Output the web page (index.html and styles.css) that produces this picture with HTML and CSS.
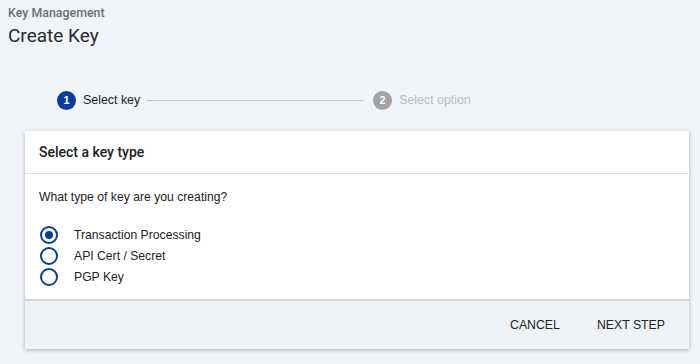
FILE: index.html
```html
<!DOCTYPE html>
<html lang="en">
<head>
    <meta charset="UTF-8">
    <meta name="viewport" content="width=device-width, initial-scale=1.0">
    <title>Create Key</title>
    <link rel="stylesheet" href="styles.css">
</head>
<body>

    <!-- Page heading -->
    <div class="page-head">
        <div class="breadcrumb">Key Management</div>
        <h1>Create Key</h1>
    </div>

    <!-- Stepper -->
    <div class="stepper">
        <div class="step active">
            <span class="step-num">1</span>
            <span class="step-label">Select key</span>
        </div>
        <div class="step-line"></div>
        <div class="step">
            <span class="step-num">2</span>
            <span class="step-label">Select option</span>
        </div>
    </div>

    <!-- Card -->
    <div class="card">
        <div class="card-header">Select a key type</div>
        <div class="card-body">
            <p class="question">What type of key are you creating?</p>
            <label class="radio">
                <input type="radio" name="keyType" checked>
                <span class="dot"></span>
                Transaction Processing
            </label>
            <label class="radio">
                <input type="radio" name="keyType">
                <span class="dot"></span>
                API Cert / Secret
            </label>
            <label class="radio">
                <input type="radio" name="keyType">
                <span class="dot"></span>
                PGP Key
            </label>
        </div>
        <div class="card-footer">
            <button class="btn">Cancel</button>
            <button class="btn">Next Step</button>
        </div>
    </div>

</body>
</html>
```

FILE: styles.css
```css
* {
    margin: 0;
    padding: 0;
    box-sizing: border-box;
}
body {
    font-family: "Liberation Sans", Arial, sans-serif;
    background-color: #f1f4f9;
    color: #222;
    height: 364px;
    overflow: hidden;
}
/* Heading */
.page-head {
    padding: 5px 8px 0;
}
.breadcrumb {
    font-family: Roboto, sans-serif;
    font-size: 12.4px;
    font-weight: 500;
    color: #6f6f6f;
    line-height: 16px;
}
h1 {
    font-family: Roboto, sans-serif;
    font-size: 19px;
    font-weight: 400;
    color: #2a2a2a;
    line-height: 26px;
    margin-top: 2px;
}
/* Stepper */
.stepper {
    display: flex;
    align-items: center;
    padding-left: 57px;
    margin-top: 41px;
    height: 20px;
}
.step {
    display: flex;
    align-items: center;
    gap: 7px;
}
.step-num {
    width: 19px;
    height: 19px;
    border-radius: 50%;
    background: #a3a3a3;
    color: white;
    font-size: 11px;
    font-weight: bold;
    display: flex;
    align-items: center;
    justify-content: center;
}
.step-label {
    font-size: 12.4px;
    color: #bdbdbd;
}
.step.active .step-num {
    background: #0a3c9c;
}
.step.active .step-label {
    color: #222;
}
.step-line {
    width: 217px;
    height: 1px;
    background: #c9c9c9;
    margin: 0 9px 0 7px;
}
/* Card */
.card {
    width: 664px;
    margin: 21px 0 0 25px;
    background: white;
    box-shadow: 0 1px 4px rgba(0, 0, 0, 0.3);
}
.card-header {
    font-family: Roboto, sans-serif;
    font-size: 14px;
    font-weight: 500;
    color: #222;
    height: 43px;
    line-height: 43px;
    padding-left: 14px;
    border-bottom: 1px solid #dcdde2;
}
.card-body {
    padding: 15px 14px 12px;
    font-size: 12.2px;
}
.question {
    line-height: 16px;
    margin-bottom: 19px;
}
.radio {
    display: flex;
    align-items: center;
    height: 21px;
    cursor: pointer;
}
.radio input {
    display: none;
}
.dot {
    width: 18px;
    height: 18px;
    border: 2px solid #0a3c9c;
    border-radius: 50%;
    margin: 0 16px 0 1px;
    display: flex;
    align-items: center;
    justify-content: center;
}
.radio input:checked + .dot::after {
    content: "";
    width: 8px;
    height: 8px;
    border-radius: 50%;
    background: #0a3c9c;
}
.card-footer {
    display: flex;
    justify-content: flex-end;
    gap: 37px;
    height: 50px;
    align-items: center;
    padding-right: 24px;
    background: #eff2f6;
    border-top: 2px solid #d2d3d6;
}
.btn {
    background: none;
    border: none;
    font-family: "Liberation Sans", Arial, sans-serif;
    font-size: 12.3px;
    text-transform: uppercase;
    color: #222;
    cursor: pointer;
}
```
